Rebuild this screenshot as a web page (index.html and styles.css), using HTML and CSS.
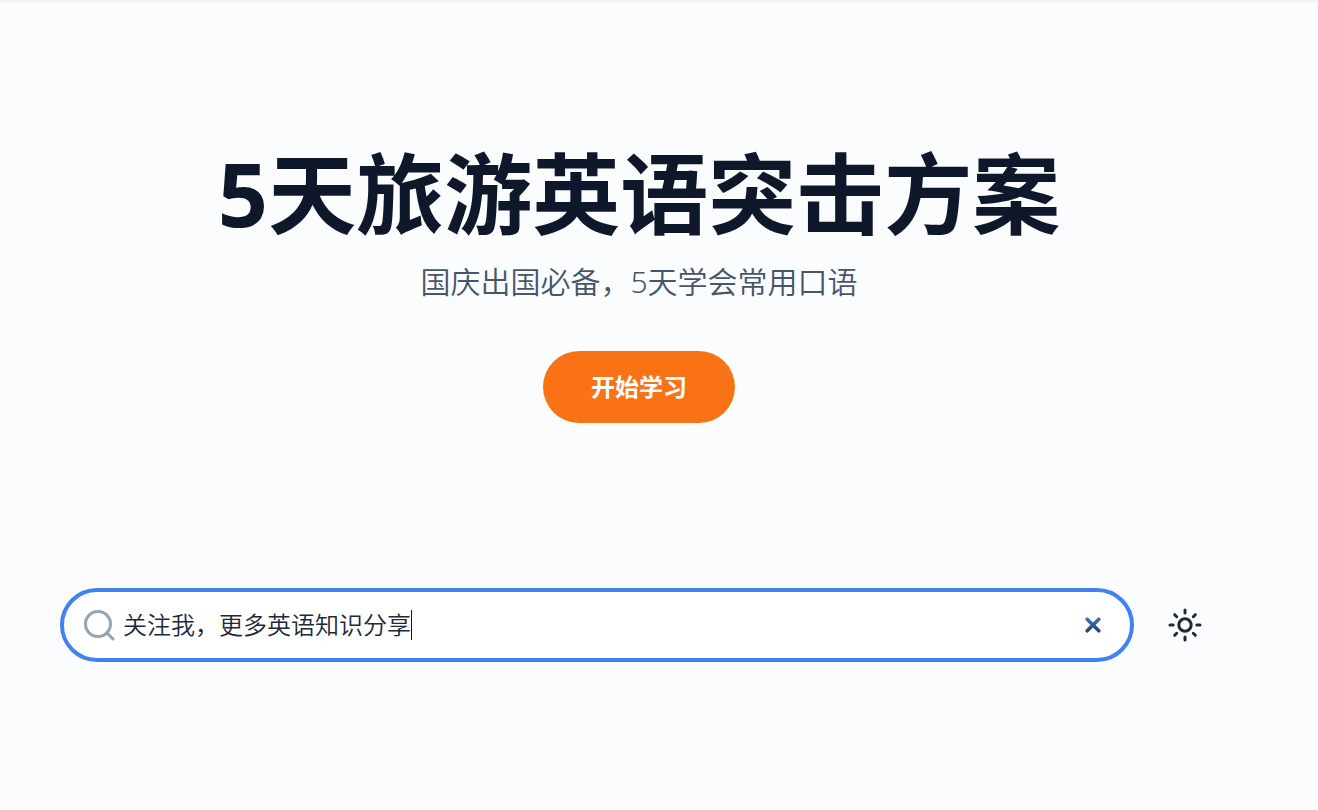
FILE: index.html
```
<!DOCTYPE html>
<html lang="zh-CN">
<head>
    <meta charset="UTF-8">
    <meta name="viewport" content="width=device-width, initial-scale=1.0">
    <title>5天旅游英语突击方案</title>
    <link rel="stylesheet" href="styles.css">
</head>
<body>
    <main class="page">
        <section class="hero">
            <h1>5天旅游英语突击方案</h1>
            <p class="subtitle">国庆出国必备，5天学会常用口语</p>
            <a class="start-button" href="#search">开始学习</a>
        </section>

        <!-- 搜索栏 -->
        <form class="toolbar" role="search">
            <div class="search-box">
                <label for="search" aria-label="搜索">
                    <svg class="search-icon" viewBox="0 0 32 32" fill="none" stroke="currentColor" stroke-width="3" stroke-linecap="round">
                        <circle cx="15" cy="15" r="12.5"/>
                        <path d="M24 24l6 6"/>
                    </svg>
                </label>
                <input id="search" type="text" value="关注我，更多英语知识分享" autocomplete="off" autofocus>
                <button class="clear-button" type="button" aria-label="清除">
                    <svg viewBox="0 0 16 16" fill="none" stroke="url(#clear-color)" stroke-width="3.6" stroke-linecap="round">
                        <defs>
                            <linearGradient id="clear-color" gradientUnits="userSpaceOnUse" x1="0" y1="0" x2="0" y2="16">
                                <stop offset="0" stop-color="#4676b5"/>
                                <stop offset="1" stop-color="#253f7a"/>
                            </linearGradient>
                        </defs>
                        <path d="M2.2 2.2l11.6 11.6M13.8 2.2L2.2 13.8"/>
                    </svg>
                </button>
            </div>
            <button class="theme-button" type="button" aria-label="切换主题">
                <svg viewBox="0 0 36 36" fill="none" stroke="currentColor" stroke-width="3" stroke-linecap="round">
                    <circle cx="18" cy="18" r="6.2"/>
                    <path d="M18 3v3M18 30v3M3 18h3.2M29.8 18H33M7.7 7.7l2 2M26.3 26.3l2 2M28.3 7.7l-2 2M9.7 26.3l-2 2"/>
                </svg>
            </button>
        </form>
    </main>

    <script>
        const search = document.getElementById('search');
        search.setSelectionRange(search.value.length, search.value.length);

        // 清空搜索内容
        document.querySelector('.clear-button').addEventListener('click', function() {
            search.value = '';
            search.focus();
        });
    </script>
</body>
</html>
```
FILE: styles.css
```
* {
    box-sizing: border-box;
}

body {
    margin: 0;
    min-height: 100vh;
    border-top: 3px solid #f3f4f6;
    background-color: #fafcfd;
    color: #0f172a;
    font-family: "Noto Sans", "Noto Sans CJK SC", sans-serif;
}

.page {
    margin-right: 40px;
    padding: 130px 60px 60px;
}

.hero {
    display: flex;
    flex-direction: column;
    align-items: center;
    text-align: center;
}

h1 {
    margin: 0;
    font-size: 88px;
    font-weight: 700;
    line-height: 120px;
}

.subtitle {
    margin: 8px 0 0;
    color: #475569;
    font-size: 30px;
    font-weight: 350;
    line-height: 42px;
}

.start-button {
    margin-top: 48px;
    padding: 18px 48px;
    border-radius: 36px;
    background-color: #f97316;
    color: white;
    font-size: 24px;
    font-weight: 700;
    line-height: 36px;
    text-decoration: none;
}

.start-button:hover {
    background-color: #ea580c;
}

/* 搜索栏 */
.toolbar {
    display: flex;
    align-items: center;
    gap: 18px;
    margin-top: 165px;
}

.search-box {
    display: flex;
    flex: 1;
    align-items: center;
    gap: 8px;
    height: 74px;
    padding: 0 24px 0 19px;
    border: 4px solid #4083ee;
    border-radius: 37px;
    background-color: white;
}

.search-box label {
    display: flex;
    color: #94a3b8;
}

.search-icon {
    width: 32px;
    height: 32px;
}

/* 宽度随文字变化，右边框作为光标 */
input {
    field-sizing: content;
    min-width: 0;
    height: 30px;
    padding: 0;
    border: none;
    border-right: 1px solid #0f172a;
    outline: none;
    background: none;
    caret-color: transparent;
    color: #1e293b;
    font-family: inherit;
    font-size: 24px;
    font-weight: 350;
    line-height: 30px;
}

button {
    display: flex;
    align-items: center;
    justify-content: center;
    padding: 0;
    border: none;
    background: none;
    cursor: pointer;
}

.clear-button {
    width: 26px;
    height: 26px;
    margin-left: auto;
}

.clear-button svg {
    width: 16px;
    height: 16px;
}

.theme-button {
    width: 66px;
    height: 66px;
    color: #1e293b;
}

.theme-button svg {
    width: 36px;
    height: 36px;
}
```
